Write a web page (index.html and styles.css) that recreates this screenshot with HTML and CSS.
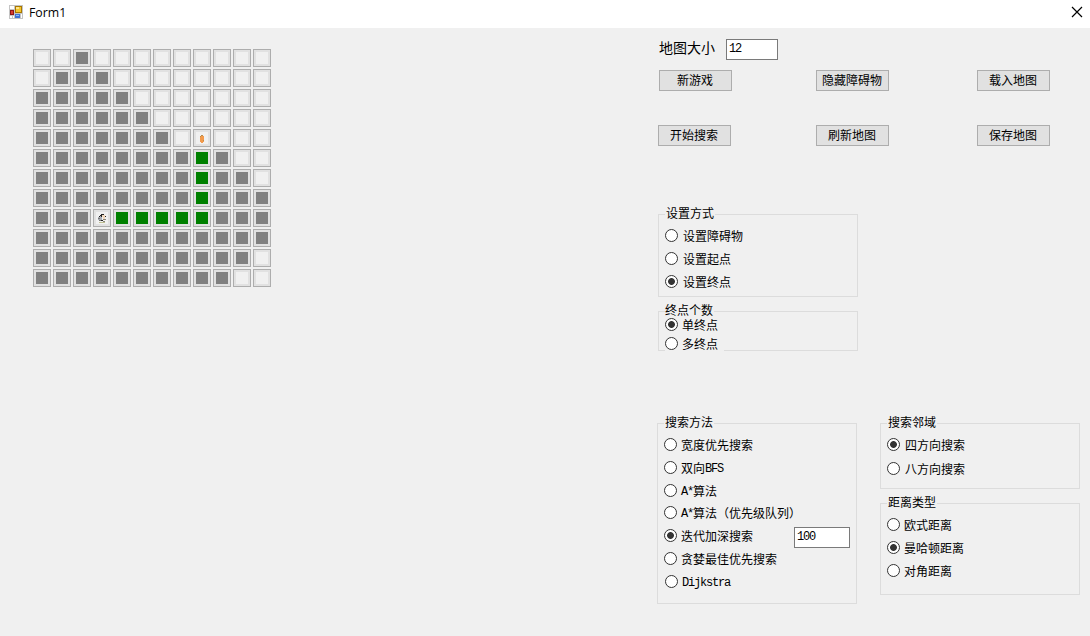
FILE: index.html
```html
<!DOCTYPE html>
<html lang="zh-CN">
<head>
<meta charset="utf-8">
<title>Form1</title>
<link rel="stylesheet" href="styles.css">
</head>
<body>
<header class="titlebar">
  <svg class="app-icon" width="14" height="14" viewBox="0 0 14 14" shape-rendering="crispEdges">
    <rect width="14" height="14" fill="#c4c4c4"/>
    <rect x="1" y="1" width="4" height="3" fill="#fff"/>
    <rect x="1" y="11" width="2" height="2" fill="#fff"/><rect x="4" y="11" width="1" height="2" fill="#fff"/>
    <rect x="12" y="9" width="1" height="4" fill="#fff"/>
    <rect x="6" y="1" width="7" height="7" fill="#a97800"/><rect x="7" y="2" width="5" height="5" fill="#f4c62d"/><rect x="7" y="2" width="3" height="2" fill="#ffe58a"/>
    <rect x="1" y="5" width="4" height="5" fill="#8c1616"/><rect x="2" y="6" width="2" height="3" fill="#d93a2c"/>
    <rect x="6" y="9" width="5" height="4" fill="#3e73d4"/><rect x="7" y="10" width="3" height="1" fill="#8fb8f6"/>
  </svg>
  <span class="title">Form1</span>
  <svg class="close" width="12" height="12" viewBox="0 0 12 12"><path d="M1 1L11 11M11 1L1 11" stroke="#000" stroke-width="1.2" fill="none"/></svg>
</header>
<main class="form">
  <div class="board" id="board"></div>
  <div class="panel">
    <div class="size-row"><span class="size-label">地图大小</span><input class="field size-field" value="12"></div>
    <div class="buttons">
      <button class="btn">新游戏</button><button class="btn">隐藏障碍物</button><button class="btn">载入地图</button>
    </div>
    <div class="buttons second">
      <button class="btn">开始搜索</button><button class="btn">刷新地图</button><button class="btn">保存地图</button>
    </div>
    <section class="group mode">
      <h2 class="legend">设置方式</h2>
      <label class="option"><i class="radio"></i>设置障碍物</label>
      <label class="option"><i class="radio"></i>设置起点</label>
      <label class="option"><i class="radio on"></i>设置终点</label>
    </section>
    <section class="group ends">
      <h2 class="legend">终点个数</h2>
      <label class="option"><i class="radio on"></i>单终点</label>
      <label class="option last"><i class="radio"></i>多终点</label>
    </section>
    <div class="search">
      <section class="group method">
        <h2 class="legend">搜索方法</h2>
        <label class="option"><i class="radio"></i>宽度优先搜索</label>
        <label class="option"><i class="radio"></i>双向<span class="mono">BFS</span></label>
        <label class="option"><i class="radio"></i><span class="mono">A*</span>算法</label>
        <label class="option tight"><i class="radio"></i><span class="mono">A*</span>算法（优先级队列）</label>
        <label class="option"><i class="radio on"></i>迭代加深搜索<input class="field depth-field" value="100"></label>
        <label class="option"><i class="radio"></i>贪婪最佳优先搜索</label>
        <label class="option shifted"><i class="radio"></i><span class="mono">Dijkstra</span></label>
      </section>
      <div class="side">
        <section class="group area">
          <h2 class="legend">搜索邻域</h2>
          <label class="option"><i class="radio on"></i>四方向搜索</label>
          <label class="option"><i class="radio"></i>八方向搜索</label>
        </section>
        <section class="group distance">
          <h2 class="legend">距离类型</h2>
          <label class="option"><i class="radio"></i>欧式距离</label>
          <label class="option"><i class="radio on"></i>曼哈顿距离</label>
          <label class="option"><i class="radio"></i>对角距离</label>
        </section>
      </div>
    </div>
  </div>
</main>
<script src="board.js"></script>
</body>
</html>
```
FILE: styles.css
```css
* { box-sizing: border-box; }
body {
  margin: 0;
  width: 1090px;
  height: 636px;
  overflow: hidden;
  background: #f0f0f0;
  color: #000;
  font: 12px/13px "Noto Sans CJK SC", sans-serif;
}
.titlebar {
  display: flex;
  height: 28px;
  padding: 5px 7px 0 9px;
  background: #fff;
}
.title {
  margin-left: 6px;
  font: 12.3px/16px "Open Sans", sans-serif;
}
.close { margin: 1px 0 0 auto; }
.form {
  display: flex;
  height: 608px;
  padding-left: 33px;
}
.board {
  display: grid;
  grid-template-columns: repeat(12, 18px);
  grid-auto-rows: 18px;
  gap: 2px;
  align-content: start;
  margin-top: 21px;
}
.cell {
  border: 1px solid #adadad;
  padding: 2px;
  background: #f0f0f0 content-box;
  box-shadow: inset 0 0 0 2px #e1e1e1;
}
.cell svg { display: block; }
.wall { background-color: #808080; }
.path { background-color: #008000; }
.panel {
  width: 423px;
  margin-left: 386px;
  padding-top: 11px;
}
.size-row {
  display: flex;
  padding-left: 2px;
}
.size-label {
  width: 67px;
  font-size: 14px;
  line-height: 17px;
}
.field {
  height: 21px;
  border: 1px solid #7a7a7a;
  padding: 0 2px 2px;
  background: #fff;
  color: #000;
  font: 12px/16px "Liberation Mono", monospace;
  letter-spacing: -1.2px;
}
.size-field { width: 52px; }
.buttons {
  display: flex;
  margin-top: 10px;
  padding-left: 2px;
}
.second {
  margin-top: 34px;
  padding-left: 1px;
}
.btn {
  width: 73px;
  height: 21px;
  border: 1px solid #adadad;
  padding: 0 1px 2px 0;
  background: #e1e1e1;
  color: #000;
  font: 12px/17px "Noto Sans CJK SC", sans-serif;
  white-space: nowrap;
}
.btn:nth-child(2) { margin: 0 88px 0 84px; }
.second .btn:nth-child(2) { margin-left: 85px; }
.group {
  display: flex;
  flex-direction: column;
  align-items: flex-start;
  gap: 10px;
  width: 200px;
  border: 1px solid #dcdcdc;
  padding: 0 6px;
}
.legend {
  flex: none;
  height: 13px;
  margin: -8px 0 -1px;
  padding: 0 1px;
  background: #f0f0f0;
  font-size: 12px;
  font-weight: 400;
  line-height: 11px;
}
.mode {
  height: 83px;
  margin: 68px 0 0 1px;
}
.ends {
  height: 40px;
  gap: 6px;
  margin: 14px 0 0 1px;
}
.ends .legend {
  margin-bottom: -5px;
  padding-left: 0;
}
.ends .radio { margin-right: 4px; }
.option {
  display: flex;
  flex: none;
  height: 13px;
  line-height: 13px;
  white-space: nowrap;
}
.last {
  width: 59px;
  height: 14px;
  background: #f0f0f0;
}
.radio {
  flex: none;
  width: 13px;
  height: 13px;
  margin-right: 5px;
  border: 1px solid #333;
  border-radius: 50%;
  background: #fff;
}
.on { background: radial-gradient(circle, #333 3px, #fff 3.8px); }
.mono {
  font: 12px/16px "Liberation Mono", monospace;
  letter-spacing: -1.2px;
}
.search {
  display: flex;
  gap: 23px;
  margin-top: 72px;
}
.method { height: 181px; }
.method .radio { margin-right: 4px; }
.method .option { width: 186px; }
.tight { margin-top: -1px; }
.shifted { padding-left: 1px; }
.depth-field {
  width: 56px;
  margin: -2px 0 0 auto;
}
.area {
  height: 66px;
  gap: 11px;
}
.area .legend { margin-bottom: -2px; }
.distance {
  height: 92px;
  margin-top: 14px;
}
.distance .radio { margin-right: 4px; }
```
FILE: board.js
```js
// # wall, + path, . open, s start, e goal
const rows = [
  "..#.........",
  ".###........",
  "#####.......",
  "######......",
  "#######.e...",
  "########+#..",
  "########+##.",
  "########+###",
  "###s+++++###",
  "############",
  "###########.",
  "##########.."
];
const icon = (body) =>
  `<svg width="12" height="12" viewBox="0 0 12 12" shape-rendering="crispEdges">${body}</svg>`;
const figure = icon(
  '<path fill="#a9adb5" d="M2 5h1V4h3v5H4V8H2z"/>' +
  '<path fill="#f3d9bd" d="M6 3h3v4H7V5H6z"/>' +
  '<path fill="#222" d="M4 3h1V2h3v1H6v1H4zM3 4h1v1H3zM5 4h1v1H5zM9 4h1v1H9zM5 8h2v1H5z"/>' +
  '<path fill="#777" d="M2 6h2v1H2zM3 8h2v1H3z"/>' +
  '<path fill="#88857a" d="M7 7h3v1H7zM7 9h2v1H7z"/>' +
  '<path fill="#bdbe91" d="M3 10h6v1H3z"/>'
);
const carrot = icon(
  '<path fill="#f29a4c" d="M4 4h4v6H7v1H5v-1H4z"/>' +
  '<path fill="#b98a4b" d="M5 3h2v1H5zM4 4h1v1H4zM7 8h1v1H7z"/>'
);
const kinds = { "#": "wall", "+": "path", ".": "open", s: "open", e: "open" };
const pictures = { s: figure, e: carrot };
document.getElementById("board").innerHTML = rows.join("").split("")
  .map((c) => `<div class="cell ${kinds[c]}">${pictures[c] || ""}</div>`)
  .join("");
```
